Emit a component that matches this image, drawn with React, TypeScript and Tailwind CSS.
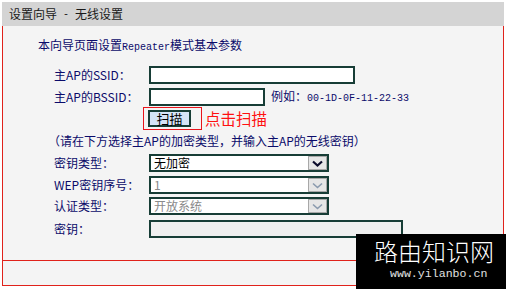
const cjk = "font-['Noto_Sans_CJK_SC','Liberation_Sans',sans-serif]";

const Chevron = ({ disabled }: { disabled?: boolean }) => (
  <svg width="11" height="7" viewBox="0 0 11 7">
    <path
      d="M1 1.5 L5.5 5.5 L10 1.5"
      fill="none"
      stroke={disabled ? "#8a9aae" : "#0a0a2a"}
      strokeWidth={disabled ? 1.6 : 2.2}
    />
  </svg>
);

const Select = ({ value, disabled }: { value: string; disabled?: boolean }) => (
  <div className="w-[180px] h-[18px] border-2 border-[#173d36] bg-white flex items-center">
    <span className={`flex-1 pl-[3px] text-[12px] leading-none ${disabled ? "text-[#8a8a8a]" : "text-black"}`}>
      {value}
    </span>
    <span className="w-[19px] h-full bg-[#e6e6e6] border border-[#a8a8a8] flex items-center justify-center">
      <Chevron disabled={disabled} />
    </span>
  </div>
);

const Row = ({ label, className, children }: { label: React.ReactNode; className: string; children: React.ReactNode }) => (
  <div className={`flex items-center h-[18px] pl-[51px] ${className}`}>
    <span className="w-[95px] text-[12px] leading-none text-[#0b0b6a]">{label}</span>
    {children}
  </div>
);

const App = () => {
  return (
    <div className={`w-[506px] h-[289px] bg-white relative overflow-hidden ${cjk}`}>
      <div className="ml-[2px] mt-[2px] w-[502px]">
        <div className="h-[24px] bg-[#d4d4d4] pl-[7px] flex items-center text-[12px] text-[#1a1a1a]">
          设置向导<span className="font-['Liberation_Mono',monospace] text-[10px] whitespace-pre"> - </span>无线设置
        </div>
        <div className="h-[235px] bg-[#f4f4f4] border-x border-b border-[#e0221b]">
          <div className="pl-[35px] pt-[11px] h-[27px] leading-[16px] text-[12px] text-[#0b0b6a]">
            本向导页面设置<span className="font-['Liberation_Mono',monospace] text-[10px]">Repeater</span>模式基本参数
          </div>
          <Row label="主AP的SSID：" className="mt-[13px]">
            <div className="w-[206px] h-[18px] border-2 border-[#173d36] bg-white" />
          </Row>
          <Row label="主AP的BSSID：" className="mt-[4px]">
            <div className="w-[116px] h-[18px] border-2 border-[#173d36] bg-white" />
            <span className="ml-[6px] text-[12px] leading-none text-[#0b0b6a]">
              例如：<span className="font-['Liberation_Mono',monospace] text-[10px]">00-1D-0F-11-22-33</span>
            </span>
          </Row>
          <div className="mt-[1px] h-[23px] pl-[140px] flex items-center">
            <div className="w-[59px] h-[23px] border border-[#e8141b] flex items-center pl-[4px]">
              <div className="w-[43px] h-[17px] border-2 border-[#173d36] bg-[#d5e4f7] flex items-center justify-center text-[13px] leading-none text-black">
                扫描
              </div>
            </div>
            <span className="ml-[3px] text-[15.5px] leading-none text-[#ff1010]">点击扫描</span>
          </div>
          <div className="mt-[3px] h-[16px] pl-[45px] leading-[16px] text-[12px] text-[#0b0b6a]">
            （请在下方选择主AP的加密类型，并输入主AP的无线密钥）
          </div>
          <Row label="密钥类型：" className="mt-[5px]">
            <Select value="无加密" />
          </Row>
          <Row label="WEP密钥序号：" className="mt-[4px]">
            <Select value="1" disabled />
          </Row>
          <Row label="认证类型：" className="mt-[3px]">
            <Select value="开放系统" disabled />
          </Row>
          <Row label="密钥：" className="mt-[5px]">
            <div className="w-[254px] h-[18px] border-2 border-[#173d36] bg-[#efefef]" />
          </Row>
        </div>
        <div className="h-[25px] bg-[#f4f4f4] border-x border-b border-[#e0221b]" />
      </div>
      <div className="absolute left-[356px] top-[234px] w-[150px] h-[55px] bg-black">
        <div className="pl-[18px] pt-[5px] h-[30px] text-[24px] leading-[24px] text-white font-light">
          路由知识网
        </div>
        <div className="pl-[34px] mt-[3px] text-[11.6px] leading-[14px] text-[#e0e0e0] font-['Liberation_Mono',monospace]">
          www.yilanbo.cn
        </div>
      </div>
    </div>
  );
};

export default App;
